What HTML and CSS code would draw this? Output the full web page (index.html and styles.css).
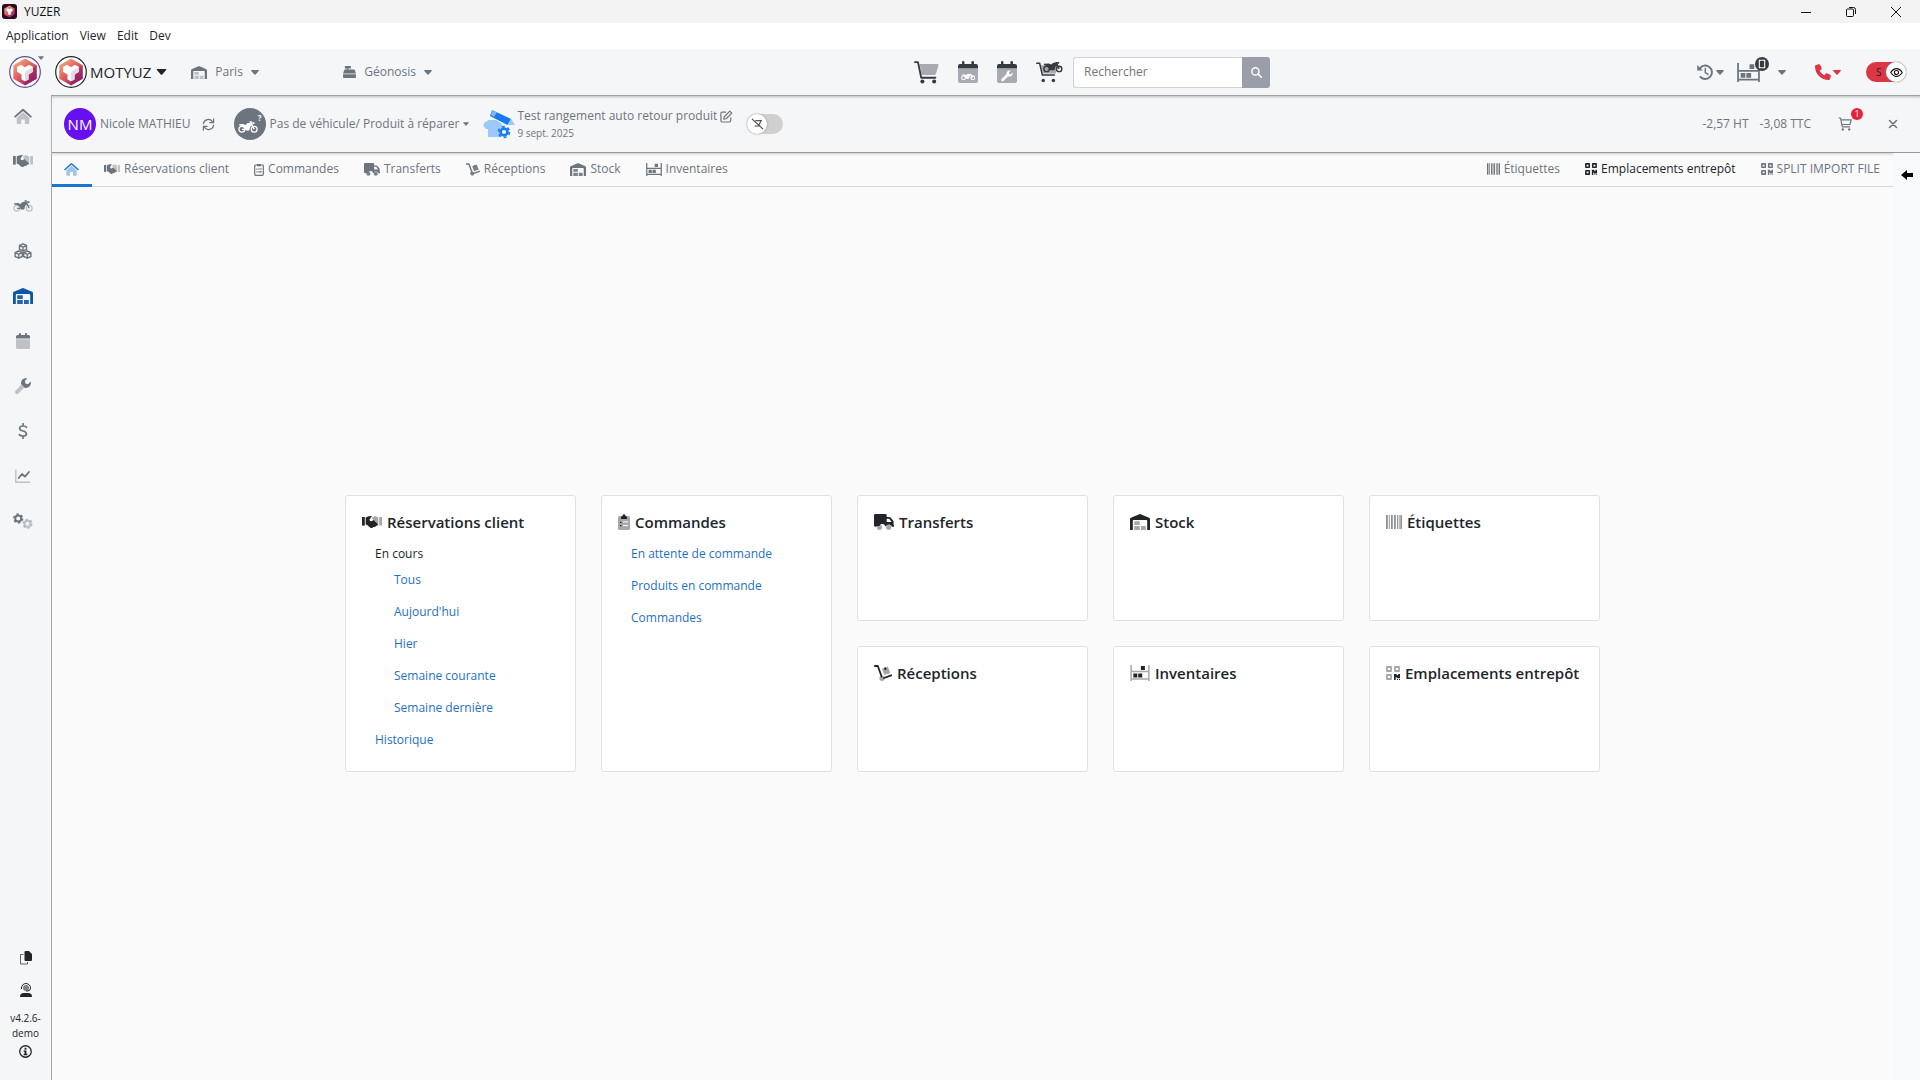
FILE: index.html
```html
<!DOCTYPE html>
<html lang="fr">
<head>
    <meta charset="UTF-8">
    <title>YUZER</title>
    <link rel="stylesheet" href="styles.css">
</head>
<body>
    <!-- Icon set -->
    <svg class="sprite" aria-hidden="true">
        <defs>
            <linearGradient id="logo-fill" x1="0.1" y1="0" x2="0.9" y2="1">
                <stop offset="0" stop-color="#f5b083" />
                <stop offset="0.45" stop-color="#e0625f" />
                <stop offset="1" stop-color="#8a1268" />
            </linearGradient>
        </defs>
        <symbol id="logo" viewBox="0 0 32 32">
            <circle cx="16" cy="16" r="15.3" fill="#fff" stroke="currentColor" stroke-width="1.2" />
            <path d="M16 2.600 27.700 9.300v13.400L16 29.400 4.300 22.700V9.300z" fill="url(#logo-fill)" />
            <path d="M16 29.400V19l11.700-9.700v13.400z" fill="#8e1767" opacity=".45" />
            <path d="m8 11 4-2.300 4 2.500 4-2.500 4 2.300v4.800l-4.500 2.600v5L16 25.300l-3.500-1.900v-5L8 15.800z" fill="#fff" />
            <path d="m16 15.800 8-4.800v4.800l-4.500 2.600v5L16 25.300z" fill="#e3dbe4" />
        </symbol>
        <symbol id="home" viewBox="0 0 18 16">
            <path class="dim" d="M9 4.200 15.300 9.700V15q0 1-1 1h-3.500v-4.500H7.200V16H3.700q-1 0-1-1V9.700z" />
            <path d="M1.200 8.600 9 1.700l7.800 6.900" fill="none" stroke="currentColor" stroke-width="1.900" stroke-linecap="round" stroke-linejoin="round" />
        </symbol>
        <symbol id="handshake" viewBox="0 0 20 14">
            <path d="M0 2h2.800v8.600H0z" />
            <path class="dim" d="M17.200 2H20v8.600h-2.800zM10 2.500 13 1l3.300 1.500v7.300L14 11z" />
            <path d="M3.700 2.500 6.500 1.200 10 1 7.500 4.600q0 1.800 2 1.700l2-1.200 4.200 4q.5 1-.6 1.600l-1 .1-1 1.200-1.400.1L10 13q-1 .4-2-.5L4.800 9.800H3.700z" />
        </symbol>
        <symbol id="moto" viewBox="0 0 20 12">
            <g fill="none" stroke="currentColor" stroke-width="1.300">
                <circle class="dim" cx="3.800" cy="8.200" r="2.900" />
                <circle class="dim" cx="16.200" cy="8.200" r="2.900" />
                <path d="m12.800 1.200 3.400 7M11.500.8h2.300M4 8.300h3" />
            </g>
            <path d="m1 3.300 4-.2 2.500.8L9.500 2l4-.2 1 2.400-2.300 1.600-1 3.700H7.800L6.300 6.500 4.500 4.900 1.500 4.700z" />
            <path d="M14 1.200h2.500v1.700h-2z" />
        </symbol>
        <symbol id="boxes" viewBox="0 0 18 16">
            <g fill="none" stroke="currentColor" stroke-width="1.400" stroke-linejoin="round">
                <path d="m9 .8 3.500 1.700v3.900L9 8 5.500 6.400V2.500zM5.500 2.500 9 4.100l3.500-1.600M9 4.100V8" />
                <path d="m4.700 8 3.600 1.700v3.800l-3.600 1.700-3.600-1.700V9.700zM1.100 9.700l3.600 1.600 3.600-1.600M4.700 11.300v3.900" />
                <path d="m13.300 8 3.600 1.700v3.800l-3.600 1.700-3.600-1.700V9.700zM9.700 9.700l3.600 1.600 3.600-1.600M13.300 11.300v3.900" />
            </g>
        </symbol>
        <symbol id="warehouse" viewBox="0 0 20 16">
            <path d="M0 16V5.200q0-1 .9-1.400L9.300.2q.7-.3 1.400 0l8.400 3.600q.9.400.9 1.400V16h-2.800V7q0-.9-.9-.9H3.700q-.9 0-.9.900v9z" />
            <path class="dim" d="M4.200 7.300h5.600v3.600H4.200zM4.200 12h5.600v4H4.200zM11 12h4.800v4H11z" />
        </symbol>
        <symbol id="calendar" viewBox="0 0 14 16">
            <path class="dim" d="M0 6.200h14v8.300q0 1.500-1.500 1.500h-11Q0 16 0 14.500z" />
            <path d="M0 5.400V3.500Q0 2 1.500 2H3V.8q0-.8.8-.8h.4q.8 0 .8.800V2h4V.8q0-.8.8-.8h.4q.8 0 .8.800V2h1.500Q14 2 14 3.500v1.900z" />
        </symbol>
        <symbol id="wrench" viewBox="0 0 16 16">
            <path class="dim" d="m6.600 6.600 2.800 2.800L3.400 15.400q-1.400 1.100-2.700 0-1.200-1.400 0-2.800z" />
            <path d="M15.600 3.600 13 6.200l-2.600-.6L9.800 3l2.600-2.600Q9.500-.5 7.400 1.600 5.500 3.700 6.200 6.300l3.500 3.500q2.600.7 4.700-1.200 2-2.100 1.200-5z" />
        </symbol>
        <symbol id="dollar" viewBox="0 0 10 16">
            <path d="M8.500 4.300Q7.500 3 5 3 1.700 3 1.600 5.200q0 2 3.400 2.800t3.400 2.900Q8.400 13 5 13q-2.600 0-3.700-1.400M5 .6v2.400M5 13v2.400" fill="none" stroke="currentColor" stroke-width="1.700" stroke-linecap="round" />
        </symbol>
        <symbol id="chart" viewBox="0 0 16 14">
            <path class="dim" d="M.8.800v12.400h14.400" fill="none" stroke="currentColor" stroke-width="1.400" />
            <path d="m3.700 9 3.200-4 3 2.700L14 3" fill="none" stroke="currentColor" stroke-width="1.800" stroke-linecap="round" stroke-linejoin="round" />
        </symbol>
        <symbol id="gears" viewBox="0 0 20 16">
            <g fill="none" stroke="currentColor">
                <circle cx="5.200" cy="5.500" r="3" stroke-width="2" />
                <circle cx="5.200" cy="5.500" r="4.400" stroke-width="1.500" stroke-dasharray="2.300 2.300" />
                <circle class="dim" cx="14.500" cy="10.800" r="3" stroke-width="2" />
                <circle class="dim" cx="14.500" cy="10.800" r="4.400" stroke-width="1.500" stroke-dasharray="2.300 2.300" />
            </g>
        </symbol>
        <symbol id="copy" viewBox="0 0 12 14">
            <path d="M4.500 0H9l3 3v6q0 1-1 1H5.500q-1 0-1-1V1q0-1 1-1z" />
            <path d="M3.500 3.500h-3v9.500h7v-2" fill="none" stroke="currentColor" opacity=".7" />
        </symbol>
        <symbol id="agent" viewBox="0 0 12 14">
            <path d="M0 14q0-4 4-4h4q4 0 4 4z" />
            <circle cx="6" cy="5" r="3" opacity=".55" />
            <path d="M1.500 6V5a4.500 4.500 0 0 1 9 0q0 3-3 3H6" fill="none" stroke="currentColor" />
        </symbol>
        <symbol id="info" viewBox="0 0 14 14">
            <circle cx="7" cy="7" r="6.200" fill="none" stroke="currentColor" stroke-width="1.400" />
            <path d="M6 3h2v2H6zM5 6h3v3.500h1V11H5V9.500h1v-2H5z" />
        </symbol>
        <symbol id="register" viewBox="0 0 14 13">
            <path d="M2 0h6.500v2.700H2zM4 2h1.600v2H4zM1.500 3.800h11l1.500 4.400H0z" />
            <path d="M0 9h14v3q0 1-1 1H1q-1 0-1-1z" />
        </symbol>
        <symbol id="caret" viewBox="0 0 10 6">
            <path d="M.8 0h8.400q1 .2.400 1L5.700 5.600q-.7.700-1.400 0L.4 1Q-.2.200.8 0z" />
        </symbol>
        <symbol id="cart" viewBox="0 0 26 24">
            <path class="dim" d="M5.700 3.200h18.800q1.300.2 1 1.400l-2.600 8.600q-.4 1.300-1.700 1.300H8z" />
            <path d="M.9 1.200h3.200L7.500 17.500h14.800" fill="none" stroke="currentColor" stroke-width="1.900" stroke-linecap="round" stroke-linejoin="round" />
            <circle cx="8.700" cy="21.500" r="2.100" />
            <circle cx="21" cy="21.500" r="2.100" />
        </symbol>
        <symbol id="calendar-moto" viewBox="0 0 20 22">
            <path class="dim" d="M0 8h20v12q0 2-2 2H2q-2 0-2-2z" />
            <path d="M0 7.500V5q0-2 2-2h2V1q0-1 1.200-1t1.200 1v2h7V1q0-1 1.200-1T16 1v2h2q2 0 2 2v2.500z" />
            <g fill="none" stroke="#fff" stroke-width="1.100"><circle cx="5.500" cy="16.800" r="1.900" /><circle cx="14.800" cy="16.800" r="1.900" /><path d="m12.500 12.800 2.300 4" /></g>
            <path d="M3.500 13.500h3l1.500.5 1.500-1h3l.5 1.500-1.300 1-.7 2.300H8.200l-1-2.300-1.500-.8z" fill="#fff" />
        </symbol>
        <symbol id="calendar-wrench" viewBox="0 0 20 22">
            <path class="dim" d="M0 8h20v12q0 2-2 2H2q-2 0-2-2z" />
            <path d="M0 7.500V5q0-2 2-2h2V1q0-1 1.200-1t1.200 1v2h7V1q0-1 1.200-1T16 1v2h2q2 0 2 2v2.500z" />
            <path d="m5.500 19 5.500-5.500" stroke="#fff" stroke-width="2.600" stroke-linecap="round" />
            <path d="m15.700 11.500-2 1.800-1.400-.4-.4-1.400 1.900-1.900q-2.500-.5-3.900 1.300-1.100 1.700 0 3.400l.9.900q1.900 1 3.600-.1 1.700-1.400 1.300-3.600z" fill="#fff" />
        </symbol>
        <symbol id="cart-moto" viewBox="0 0 28 22">
            <path class="dim" d="M5 4h17l-1.500 8.500H7z" />
            <path d="M.8 2h3l2.800 12.200h12.500" fill="none" stroke="currentColor" stroke-width="1.600" stroke-linecap="round" />
            <circle cx="7.500" cy="19.800" r="1.800" />
            <circle cx="18" cy="19.800" r="1.800" />
            <g fill="none" stroke="currentColor" stroke-width="1.500"><circle cx="11" cy="7.800" r="2.800" /><circle cx="24" cy="7.800" r="2.800" /><path d="m20.500 1 3.500 6.800" /></g>
            <path d="m8 2.500 5.500-.2 2.300.9L18 1.500l3.500-.3 1.200 2.500-2.500 1.500-1.200 3.900h-4.200l-1.500-3-2-1.600L8.500 4z" />
            <path d="M20.500.5H24v2h-2.500z" />
        </symbol>
        <symbol id="search" viewBox="0 0 12 12">
            <circle cx="4.800" cy="4.800" r="3.900" fill="none" stroke="currentColor" stroke-width="1.600" />
            <path d="m7.800 7.800 3.400 3.400" stroke="currentColor" stroke-width="1.800" stroke-linecap="round" />
        </symbol>
        <symbol id="history" viewBox="0 0 16 16">
            <path d="M2.700 4.500A6.700 6.700 0 1 1 3.500 13" fill="none" stroke="currentColor" stroke-width="1.900" stroke-linecap="round" />
            <path d="M.2 1v5.600h5.600z" />
            <path d="M8.300 4.500v4l2.700 1.900" fill="none" stroke="currentColor" stroke-width="1.500" stroke-linecap="round" />
        </symbol>
        <symbol id="shelf" viewBox="0 0 22 18">
            <path class="frame" d="M1 0v18M21 0v18M1 7.400h20M1 15.800h20" fill="none" stroke="currentColor" stroke-width="1.700" />
            <path d="M12 1.200h4.500v4.500H12zM3.500 9.500H8V14H3.500zM9 9.500h4.500V14H9z" />
        </symbol>
        <symbol id="tablet" viewBox="0 0 14 14">
            <circle cx="7" cy="7" r="7" />
            <path d="M4.300 3.200h5.400v7.600H4.300z" fill="none" stroke="#fff" stroke-width="1.100" />
        </symbol>
        <symbol id="phone" viewBox="0 0 16 16">
            <path d="M5.200.8q-.4-.9-1.400-.6L1 1Q0 1.300 0 2.300 0 8 4 12t9.700 4q1 0 1.300-1l.9-2.900q.2-1-.7-1.400l-3.300-1.400q-.8-.3-1.400.4l-1.300 1.700Q6 9.500 4.600 6.800l1.700-1.300q.6-.6.300-1.400z" />
        </symbol>
        <symbol id="eye" viewBox="0 0 14 10">
            <path d="M.8 5Q3.500.8 7 .8T13.200 5Q10.500 9.200 7 9.200T.8 5z" fill="none" stroke="currentColor" stroke-width="1.200" />
            <circle cx="7" cy="5" r="2.200" fill="none" stroke="currentColor" stroke-width="1.200" />
        </symbol>
        <symbol id="refresh" viewBox="0 0 14 14">
            <path d="M1.500 6A5.500 5.500 0 0 1 11.300 3.800M12.500 8A5.500 5.500 0 0 1 2.700 10.200M12.500 1v4h-4M1.500 13V9h4" fill="none" stroke="currentColor" stroke-width="1.300" stroke-linecap="round" stroke-linejoin="round" />
        </symbol>
        <symbol id="shirt-edit" viewBox="0 0 32 30">
            <path d="m1 14 5-3h7l5 3 2 4-3 2v8H5v-8H3l-2.500-3z" fill="#9cc8fb" />
            <path d="m9 1 19 9-3.500 6L7 7z" fill="#147bf0" />
            <path d="m9 1-1 5 3 2 3-4.500z" fill="#7cb5f7" />
            <path d="m28 10 4 6-7.500 0z" fill="#9cc8fb" />
            <circle cx="21" cy="23" r="3.400" fill="#f5f7f9" stroke="#147bf0" stroke-width="2.600" />
            <circle cx="21" cy="23" r="5.400" fill="none" stroke="#147bf0" stroke-width="1.800" stroke-dasharray="2.830 2.830" />
        </symbol>
        <symbol id="edit" viewBox="0 0 14 14">
            <path d="M6 2.200H2.500q-1.500 0-1.500 1.500v7.700q0 1.500 1.500 1.500h7.600q1.500 0 1.500-1.500V8.500" fill="none" stroke="currentColor" stroke-width="1.300" stroke-linecap="round" />
            <path d="m10.500 1.200 2.200 2.200-6 6-2.600.500.500-2.600z" fill="none" stroke="currentColor" stroke-width="1.300" stroke-linejoin="round" />
        </symbol>
        <symbol id="unpin" viewBox="0 0 14 14">
            <path d="m1 1 12 11M4.500 3 11 2.700 8.500 7.500M4 8.500h5.200" fill="none" stroke="currentColor" stroke-width="1.100" />
        </symbol>
        <symbol id="cart-line" viewBox="0 0 14 14">
            <path d="M.5 1h2l1.800 8.800h7.700M2.900 2.800h10.300l-1.300 4.700H3.800" fill="none" stroke="currentColor" stroke-width="1.200" stroke-linejoin="round" />
            <circle cx="4.800" cy="12.400" r="1.200" /><circle cx="11.200" cy="12.400" r="1.200" />
        </symbol>
        <symbol id="times" viewBox="0 0 10 10">
            <path d="m1.500 1.500 7 7M8.500 1.500l-7 7" stroke="currentColor" stroke-width="1.600" stroke-linecap="round" />
        </symbol>
        <symbol id="clipboard-line" viewBox="0 0 10 13">
            <path d="M3 2H1.800Q.7 2 .7 3v8.300q0 1 1 1h6.600q1 0 1-1V3q0-1-1-1H7" fill="none" stroke="currentColor" stroke-width="1.200" />
            <path d="M3 .9h4v2.400H3zM2.300 5.500h1.200v1.200H2.300zM4.300 5.500h3.500v1.100H4.300zM2.300 8.300h1.200v1.200H2.300zM4.300 8.300h3.500v1.100H4.300z" />
        </symbol>
        <symbol id="clipboard" viewBox="0 0 12 16">
            <path class="dim" d="M1.500 2h9Q12 2 12 3.500v11q0 1.500-1.500 1.500h-9Q0 16 0 14.500v-11Q0 2 1.500 2z" />
            <path d="M3 5V2.500h1.200Q4.500.2 6 .2t1.800 2.300H9V5z" />
            <path d="M2 7.700h1.400V9H2zM2 11h1.400v1.300H2z" />
            <path d="M5 7.900h5M5 11.600h5" stroke="#fff" />
        </symbol>
        <symbol id="truck" viewBox="0 0 20 16">
            <path d="M1.200 0h10.300q1.200 0 1.200 1.200V3h2.600q.7 0 1.200.5l2.600 3q.5.500.5 1.200V11h.4v1.800h-2A3.200 3.200 0 0 0 12 12.300h-.6a3.200 3.200 0 0 0-6.200 0 3.200 3.200 0 0 0-3.400.5Q0 12.800 0 11.500V1.200Q0 0 1.200 0zm11.500 4.700V8h4.900l-2.400-3.300z" />
            <circle class="dim" cx="5.500" cy="13.300" r="2.600" />
            <circle class="dim" cx="14.700" cy="13.300" r="2.600" />
        </symbol>
        <symbol id="dolly" viewBox="0 0 18 16">
            <path d="M.8 1h3l3.800 10.500M10 13l7.200-2.700" fill="none" stroke="currentColor" stroke-width="1.800" stroke-linecap="round" stroke-linejoin="round" />
            <path class="dim" d="m8 3.800 5.800-2.200 2.500 6.300-6 2.200z" />
            <circle class="dim" cx="8" cy="13.300" r="2.600" />
            <path d="m10 3 1.800-.7.900 2.300-1.800.7z" />
        </symbol>
        <symbol id="barcode" viewBox="0 0 16 14">
            <path d="M0 0h1.800v14H0zM2.800 0h.9v14h-.9zM5 0h1.800v14H5zM8 0h1.800v14H8zM11 0h.9v14H11zM12.700 0h.9v14h-.9zM14.300 0H16v14h-1.700z" />
        </symbol>
        <symbol id="qrcode" viewBox="0 0 14 14">
            <path class="frame" d="M1 1h4v4H1zM9 1h4v4H9zM1 9h4v4H1z" fill="none" stroke="currentColor" stroke-width="1.800" stroke-linejoin="round" />
            <path d="M8 8h2.200l1 1.200h1V8H14v4.300h-3.500V11H9.700v3H8zM11 13h1v1h-1zM13 13h1v1h-1z" />
        </symbol>
        <symbol id="arrow-left" viewBox="0 0 12 10">
            <path d="M6 0v3h6v4H6v3L0 5z" />
        </symbol>
    </svg>

    <!-- Window frame -->
    <div class="titlebar">
        <svg class="app-icon" viewBox="0 0 15 15"><rect width="15" height="15" rx="3" fill="#280b24" /><path d="m7.500 1.500 5.200 3v6l-5.200 3-5.200-3v-6z" fill="url(#logo-fill)" /><path d="m4.500 5 1.500-.8 1.500 1 1.500-1 1.500.8v2L8.800 8v2.500L7.500 11l-1.300-.5V8L4.500 7z" fill="#fff" /></svg>
        <span>YUZER</span>
        <div class="window-buttons">
            <button aria-label="Réduire"><svg viewBox="0 0 12 12"><path d="M1 6.500h10" /></svg></button>
            <button aria-label="Restaurer"><svg viewBox="0 0 12 12"><path d="M1.500 4q0-1 1-1h5q1 0 1 1v5.500q0 1-1 1h-5q-1 0-1-1zM4 1.500h4.500q2 0 2 2V8" /></svg></button>
            <button aria-label="Fermer"><svg viewBox="0 0 12 12"><path d="m1 1 10 10M11 1 1 11" /></svg></button>
        </div>
    </div>
    <nav class="menubar">
        <button>Application</button>
        <button>View</button>
        <button>Edit</button>
        <button>Dev</button>
    </nav>

    <header class="header">
        <button class="brand" aria-label="Yuzer">
            <svg class="logo"><use href="#logo" /></svg>
            <svg class="brand-caret"><use href="#caret" /></svg>
        </button>
        <button class="company">
            <svg class="logo"><use href="#logo" /></svg>
            <span>MOTYUZ</span>
            <svg class="caret-lg"><use href="#caret" /></svg>
        </button>
        <div class="picker picker-site">
            <svg width="16" height="13"><use href="#warehouse" /></svg>
            <select aria-label="Site"><option>Paris</option></select>
            <svg class="caret"><use href="#caret" /></svg>
        </div>
        <div class="picker">
            <svg width="13" height="12"><use href="#register" /></svg>
            <select aria-label="Caisse"><option>Géonosis</option></select>
            <svg class="caret"><use href="#caret" /></svg>
        </div>

        <div class="quick">
            <button aria-label="Vente"><svg width="25" height="23"><use href="#cart" /></svg></button>
            <button aria-label="Agenda véhicules"><svg width="20" height="22"><use href="#calendar-moto" /></svg></button>
            <button aria-label="Agenda atelier"><svg width="20" height="22"><use href="#calendar-wrench" /></svg></button>
            <button aria-label="Vente véhicule"><svg width="27" height="22"><use href="#cart-moto" /></svg></button>
        </div>
        <form class="search">
            <input type="search" aria-label="Rechercher" placeholder="Rechercher">
            <button aria-label="Lancer la recherche"><svg width="11" height="11"><use href="#search" /></svg></button>
        </form>

        <div class="tools">
            <button aria-label="Historique"><svg width="16" height="16"><use href="#history" /></svg><svg class="caret"><use href="#caret" /></svg></button>
            <button class="shelf" aria-label="Rangement"><svg width="23" height="19"><use href="#shelf" /></svg><svg class="tablet"><use href="#tablet" /></svg><svg class="caret"><use href="#caret" /></svg></button>
            <button class="phone" aria-label="Appels"><svg width="16" height="16"><use href="#phone" /></svg><svg class="caret"><use href="#caret" /></svg></button>
            <label class="switch switch-red">
                <input type="checkbox" aria-label="Mode d'affichage" checked>
                <span>S</span>
                <svg><use href="#eye" /></svg>
            </label>
        </div>
    </header>

    <div class="shell">
        <aside class="sidebar">
            <nav>
                <a href="#" aria-label="Accueil"><svg width="18" height="16"><use href="#home" /></svg></a>
                <a href="#" aria-label="Clients"><svg width="20" height="14"><use href="#handshake" /></svg></a>
                <a href="#" aria-label="Véhicules"><svg width="20" height="12"><use href="#moto" /></svg></a>
                <a href="#" aria-label="Produits"><svg width="18" height="16"><use href="#boxes" /></svg></a>
                <a href="#" class="active" aria-label="Entrepôt"><svg width="20" height="16"><use href="#warehouse" /></svg></a>
                <a href="#" aria-label="Agenda"><svg width="14" height="16"><use href="#calendar" /></svg></a>
                <a href="#" aria-label="Atelier"><svg width="16" height="16"><use href="#wrench" /></svg></a>
                <a href="#" aria-label="Finances"><svg width="10" height="16"><use href="#dollar" /></svg></a>
                <a href="#" aria-label="Statistiques"><svg width="16" height="14"><use href="#chart" /></svg></a>
                <a href="#" aria-label="Paramètres"><svg width="20" height="16"><use href="#gears" /></svg></a>
            </nav>
            <div class="sidebar-foot">
                <button aria-label="Copier"><svg width="12" height="14"><use href="#copy" /></svg></button>
                <button aria-label="Assistance"><svg width="12" height="14"><use href="#agent" /></svg></button>
                <p>v4.2.6-demo</p>
                <button class="about" aria-label="À propos"><svg width="13" height="13"><use href="#info" /></svg></button>
            </div>
        </aside>

        <div class="content">
            <section class="context">
                <span class="avatar">NM</span>
                <a href="#" class="customer">Nicole MATHIEU</a>
                <button class="refresh" aria-label="Actualiser"><svg width="13" height="13"><use href="#refresh" /></svg></button>
                <span class="avatar avatar-moto"><svg width="20" height="12"><use href="#moto" /></svg><b>?</b></span>
                <button class="vehicle">Pas de véhicule/ Produit à réparer <svg class="caret-sm"><use href="#caret" /></svg></button>
                <svg width="32" height="30"><use href="#shirt-edit" /></svg>
                <div class="job">
                    <p>Test rangement auto retour produit <button aria-label="Modifier"><svg width="13" height="13"><use href="#edit" /></svg></button></p>
                    <time datetime="2025-09-09">9 sept. 2025</time>
                </div>
                <label class="switch">
                    <input type="checkbox" aria-label="Épingler">
                    <svg><use href="#unpin" /></svg>
                </label>
                <div class="totals">
                    <span>-2,57 HT</span>
                    <span>-3,08 TTC</span>
                </div>
                <button class="basket" aria-label="Panier"><svg width="14" height="14"><use href="#cart-line" /></svg><span class="badge">1</span></button>
                <button class="close" aria-label="Fermer"><svg width="10" height="10"><use href="#times" /></svg></button>
            </section>

            <div class="workspace">
                <main>
                    <nav class="tabs">
                        <a href="#" class="tab-home" aria-label="Entrepôt"><svg width="15" height="14"><use href="#home" /></svg></a>
                        <a href="#"><svg width="16" height="12"><use href="#handshake" /></svg>Réservations client</a>
                        <a href="#"><svg width="10" height="13"><use href="#clipboard-line" /></svg>Commandes</a>
                        <a href="#" class="solid"><svg width="16" height="13"><use href="#truck" /></svg>Transferts</a>
                        <a href="#" class="solid"><svg width="14" height="13"><use href="#dolly" /></svg>Réceptions</a>
                        <a href="#" class="solid"><svg width="16" height="13"><use href="#warehouse" /></svg>Stock</a>
                        <a href="#"><svg width="16" height="13"><use href="#shelf" /></svg>Inventaires</a>
                        <a href="#" class="push"><svg width="13" height="12"><use href="#barcode" /></svg>Étiquettes</a>
                        <a href="#" class="dark"><svg width="12" height="12"><use href="#qrcode" /></svg>Emplacements entrepôt</a>
                        <a href="#"><svg width="12" height="12"><use href="#qrcode" /></svg>SPLIT IMPORT FILE</a>
                    </nav>

                    <div class="cards">
                        <section class="card tall">
                            <h2><svg width="20" height="14"><use href="#handshake" /></svg>Réservations client</h2>
                            <ul>
                                <li>
                                    <span>En cours</span>
                                    <ul>
                                        <li><a href="#">Tous</a></li>
                                        <li><a href="#">Aujourd'hui</a></li>
                                        <li><a href="#">Hier</a></li>
                                        <li><a href="#">Semaine courante</a></li>
                                        <li><a href="#">Semaine dernière</a></li>
                                    </ul>
                                </li>
                                <li><a href="#">Historique</a></li>
                            </ul>
                        </section>
                        <section class="card tall">
                            <h2><svg width="12" height="16"><use href="#clipboard" /></svg>Commandes</h2>
                            <ul>
                                <li><a href="#">En attente de commande</a></li>
                                <li><a href="#">Produits en commande</a></li>
                                <li><a href="#">Commandes</a></li>
                            </ul>
                        </section>
                        <section class="card"><h2><svg width="20" height="16"><use href="#truck" /></svg>Transferts</h2></section>
                        <section class="card"><h2><svg width="20" height="16"><use href="#warehouse" /></svg>Stock</h2></section>
                        <section class="card"><h2><svg class="faded" width="16" height="14"><use href="#barcode" /></svg>Étiquettes</h2></section>
                        <section class="card"><h2><svg width="18" height="16"><use href="#dolly" /></svg>Réceptions</h2></section>
                        <section class="card"><h2><svg class="duo" width="20" height="16"><use href="#shelf" /></svg>Inventaires</h2></section>
                        <section class="card"><h2><svg class="duo" width="14" height="14"><use href="#qrcode" /></svg>Emplacements entrepôt</h2></section>
                    </div>
                </main>
                <aside class="drawer">
                    <button aria-label="Ouvrir le panneau"><svg width="12" height="10"><use href="#arrow-left" /></svg></button>
                </aside>
            </div>
        </div>
    </div>
</body>
</html>
```
FILE: styles.css
```css
* {
    box-sizing: border-box;
}
body {
    margin: 0;
    min-height: 100vh;
    display: flex;
    flex-direction: column;
    font-family: "Open Sans", "Noto Sans", sans-serif;
    font-size: 12px;
    line-height: 20px;
    color: #212529;
    background: #fafafa;
}
button, input, select {
    font: inherit;
    color: inherit;
}
button {
    display: flex;
    align-items: center;
    padding: 0;
    border: none;
    background: none;
    cursor: pointer;
}
a {
    color: inherit;
    text-decoration: none;
}
p, ul, h2 {
    margin: 0;
    padding: 0;
}
ul {
    list-style: none;
}
svg {
    flex: none;
    fill: currentColor;
}
.sprite {
    position: absolute;
    width: 0;
    height: 0;
}
.dim {
    opacity: var(--dim, 0.4);
}
.frame {
    opacity: var(--frame, 1);
}

/* window frame */
.titlebar {
    display: flex;
    align-items: center;
    height: 23px;
    padding: 0 2px;
    gap: 7px;
    background: #f3f3f3;
    color: #111;
}
.app-icon {
    width: 15px;
    height: 15px;
}
.window-buttons {
    display: flex;
    margin-left: auto;
}
.window-buttons button {
    width: 45px;
    height: 20px;
    justify-content: center;
}
.window-buttons svg {
    width: 12px;
    height: 12px;
    fill: none;
    stroke: #111;
}
.menubar {
    display: flex;
    align-items: center;
    height: 26px;
    padding-left: 6px;
    gap: 11px;
    background: #fff;
}

/* header */
.header {
    display: flex;
    align-items: center;
    height: 46px;
    background: #f5f6f8;
    color: #6c757d;
}
.logo {
    width: 32px;
    height: 32px;
}
.brand {
    width: 55px;
    padding-left: 9px;
    align-items: flex-start;
    color: #5b4a9c;
}
.brand-caret {
    width: 6px;
    height: 4px;
    margin-left: -3px;
    color: #6c757d;
}
.company {
    gap: 3px;
    font-size: 15px;
    color: #212529;
}
.caret {
    width: 8px;
    height: 5px;
}
.caret-lg {
    width: 11px;
    height: 6px;
    margin-left: 2px;
}
.caret-sm {
    width: 6px;
    height: 4px;
}
.picker {
    display: flex;
    align-items: center;
    gap: 8px;
}
.picker select {
    appearance: none;
    padding: 0;
    border: none;
    background: none;
}
.picker-site {
    width: 152px;
    margin-left: 24px;
}
.quick {
    display: flex;
    align-items: center;
    gap: 19px;
    margin: 0 10px 0 auto;
    color: #343a40;
}
.search {
    display: flex;
    height: 31px;
}
.search input {
    width: 169px;
    padding: 0 10px;
    border: 1px solid #ced4da;
    border-right: none;
    border-radius: 3px 0 0 3px;
    background: #fff;
    outline: none;
}
.search button {
    width: 28px;
    justify-content: center;
    border-radius: 0 3px 3px 0;
    background: #9a9ea8;
    color: #fff;
}
.tools {
    display: flex;
    align-items: center;
    width: 650px;
    padding-right: 14px;
    justify-content: flex-end;
}
.tools button {
    gap: 3px;
}
.tools .shelf {
    position: relative;
    gap: 18px;
    margin: 0 29px 0 13px;
}
.tablet {
    position: absolute;
    left: 18px;
    top: -6px;
    width: 14px;
    height: 14px;
    color: #343a40;
}
.tools .phone {
    gap: 2px;
    margin-right: 25px;
    color: #dc3545;
}

/* switches */
.switch {
    position: relative;
    display: flex;
    align-items: center;
}
.switch input {
    appearance: none;
    display: flex;
    width: 36px;
    height: 20px;
    margin: 0;
    border-radius: 10px;
    background: #d0d0d0;
}
.switch input::before {
    content: "";
    width: 20px;
    height: 20px;
    border-radius: 50%;
    background: #fff;
    box-shadow: 0 0 2px #888;
}
.switch svg {
    position: absolute;
    left: 4px;
    width: 13px;
    height: 13px;
    color: #444;
}
.switch-red input {
    width: 40px;
    justify-content: flex-end;
    background: #dc3545;
}
.switch-red span {
    position: absolute;
    left: 10px;
    font-size: 10px;
    color: #212529;
}
.switch-red svg {
    left: 24px;
    color: #111;
}

/* page shell */
.shell {
    flex: 1;
    display: flex;
}
.sidebar {
    width: 51px;
    display: flex;
    flex-direction: column;
    justify-content: space-between;
    background: #f5f6f8;
    color: #6c757d;
}
.sidebar nav {
    margin-top: -2px;
}
.sidebar nav a {
    display: flex;
    align-items: center;
    justify-content: center;
    width: 46px;
    height: 45px;
}
.sidebar .active {
    --dim: 0.9;
    color: #0d55a5;
}
.sidebar-foot {
    display: flex;
    flex-direction: column;
    align-items: center;
    padding-bottom: 19px;
    color: #212529;
    font-size: 10px;
    line-height: 15px;
}
.sidebar-foot button {
    height: 32px;
}
.sidebar-foot p {
    width: 40px;
    margin-top: 5px;
    text-align: center;
}
.sidebar-foot .about {
    height: 20px;
}
.content {
    flex: 1;
    display: flex;
    flex-direction: column;
    border-left: 1px solid #a3a5a8;
    border-top: 1px solid #96989b;
}

/* customer bar */
.context {
    display: flex;
    align-items: center;
    height: 57px;
    padding: 0 22px 0 12px;
    border-bottom: 1px solid #96989b;
    background: #f5f6f8;
    box-shadow: inset 0 3px 3px -2px #bbb, 0 1px 3px #ccc;
    color: #6c757d;
}
.avatar {
    display: flex;
    align-items: center;
    justify-content: center;
    width: 32px;
    height: 32px;
    border-radius: 50%;
    background: #6610f2;
    color: #fff;
    font-size: 15px;
}
.customer {
    margin-left: 4px;
}
.refresh {
    margin: 0 19px 0 11px;
}
.avatar-moto {
    --dim: 1;
    position: relative;
    background: #6c757d;
}
.avatar-moto b {
    position: absolute;
    top: 6px;
    right: 4px;
    font-size: 8px;
    line-height: 8px;
}
.avatar-moto svg {
    margin: 5px 4px 0 0;
}
.vehicle {
    gap: 4px;
    margin: 0 14px 0 4px;
}
.job {
    margin: 0 14px 0 2px;
}
.job p {
    display: flex;
    gap: 3px;
    line-height: 18px;
}
.job time {
    display: block;
    font-size: 10px;
    line-height: 16px;
}
.totals {
    display: flex;
    gap: 11px;
    margin-left: auto;
}
.basket {
    position: relative;
    margin: 0 36px 0 27px;
}
.badge {
    position: absolute;
    left: 13px;
    top: -9px;
    width: 12px;
    height: 12px;
    border-radius: 50%;
    background: #e8213b;
    color: #fff;
    font-size: 9px;
    line-height: 12px;
    text-align: center;
}

/* workspace */
.workspace {
    flex: 1;
    display: flex;
}
.workspace main {
    flex: 1;
    display: flex;
    flex-direction: column;
}
.drawer {
    width: 27px;
    padding: 17px 0 0 8px;
    background: #f8f9fa;
    color: #000;
}
.tabs {
    display: flex;
    height: 34px;
    border-bottom: 1px solid #d5d8db;
    color: #6c757d;
}
.tabs a {
    display: flex;
    align-items: center;
    gap: 4px;
    height: 34px;
    padding: 0 13px 2px 12px;
}
.tabs .tab-home {
    border-bottom: 3px solid #1976d2;
    padding-bottom: 0;
    color: #1976d2;
}
.tabs .solid {
    --dim: 0.9;
}
.tabs .push {
    margin-left: auto;
}
.tabs .dark {
    color: #212529;
}
.cards {
    flex: 1;
    display: grid;
    grid-template-columns: repeat(5, 231px);
    grid-auto-rows: 126px;
    gap: 25px;
    place-content: center;
}
.card {
    padding: 14px 16px;
    border: 1px solid #dee2e6;
    border-radius: 3px;
    background: #fff;
}
.tall {
    grid-row: span 2;
}
.card h2 {
    display: flex;
    align-items: center;
    gap: 5px;
    font-size: 15px;
    font-weight: 600;
    line-height: 24px;
    white-space: nowrap;
}
.card ul {
    margin: 4px 0 0 13px;
}
.card li {
    line-height: 32px;
}
.card li ul {
    margin: 0 0 0 19px;
}
.card li span {
    display: block;
    padding-top: 6px;
    line-height: 20px;
}
.card li a {
    color: #1f70c1;
}
.faded {
    opacity: 0.5;
}
.duo {
    --frame: 0.4;
}
```
